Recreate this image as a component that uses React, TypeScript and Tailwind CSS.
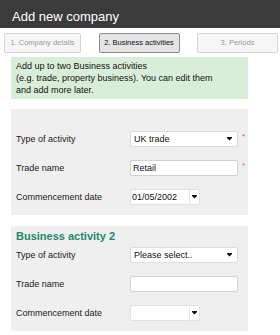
import React from 'react';

const font = { fontFamily: '"Liberation Sans", Arial, sans-serif' };

const Arrow = () => (
  <svg width="5" height="4" viewBox="0 0 5 4" className="block">
    <path d="M0 0h5v1L2.5 3.5 0 1z" fill="#111" />
  </svg>
);

const Select: React.FC<{ value: string }> = ({ value }) => (
  <div className="flex h-[16px] w-[108px] items-center justify-between rounded-[2px] border border-[#dcdcdc] bg-white pl-[3px] pr-[5px]">
    <span className="text-[9px] leading-none text-[#111]">{value}</span>
    <Arrow />
  </div>
);

const Input: React.FC<{ value?: string }> = ({ value }) => (
  <div className="flex h-[16px] w-[108px] items-center rounded-[2px] border border-[#d2d2d2] bg-white pl-[2px]">
    <span className="text-[9px] leading-none text-[#111]">{value}</span>
  </div>
);

const DateInput: React.FC<{ value?: string }> = ({ value }) => (
  <div className="flex h-[16px]">
    <div className="flex w-[59px] items-center rounded-l-[2px] border border-r-0 border-[#e2e2e2] bg-white pl-[1px]">
      <span className="text-[9px] leading-none text-[#111]">{value}</span>
    </div>
    <div className="flex w-[11px] items-center justify-center rounded-r-[2px] border border-[#e2e2e2] bg-white">
      <Arrow />
    </div>
  </div>
);

const Row: React.FC<{ label: string; required?: boolean; children: React.ReactNode }> = ({ label, required, children }) => (
  <div className="flex items-center">
    <div className="w-[114px] text-[9px] leading-none text-[#1a1a1a]">{label}</div>
    {children}
    {required && <span className="ml-[4px] -mt-[5px] text-[8px] leading-none text-[#e25b5b]">*</span>}
  </div>
);

const Tab: React.FC<{ label: string; active?: boolean; w: string }> = ({ label, active, w }) => (
  <div
    className={`flex h-[20px] items-center justify-center rounded-[2px] border text-[7.5px] ${w} ${
      active ? 'border-[#8c8c8c] bg-[#e4e4e4] text-[#111]' : 'border-[#d4d4d4] bg-[#f6f6f6] text-[#9a9a9a]'
    }`}
  >
    {label}
  </div>
);

export default function App() {
  return (
    <div className="h-[335px] w-[280px] overflow-hidden bg-white" style={font}>
      {/* Header */}
      <div className="h-[28px] bg-[#3b3b3b] pl-[12px] pt-[9px] text-[13px] leading-[15px] text-white">Add new company</div>

      {/* Step tabs */}
      <div className="mt-[5px] flex justify-between pl-[4px] pr-[2px]">
        <Tab label="1. Company details" w="w-[77px]" />
        <Tab label="2. Business activities" w="w-[81px]" active />
        <Tab label="3. Periods" w="w-[81px]" />
      </div>

      <div className="w-[248px] pl-[11px]">
        {/* Info box */}
        <div className="mt-[4px] bg-[#d9eed8] px-[5px] py-[3px] text-[9px] leading-[12px] text-[#111]">
          Add up to two Business activities
          <br />
          (e.g. trade, property business). You can edit them
          <br />
          and add more later.
        </div>

        {/* Activity 1 */}
        <div className="mt-[10px] flex flex-col gap-[13px] bg-[#efefef] pb-[10px] pl-[5px] pt-[22px]">
          <Row label="Type of activity" required>
            <Select value="UK trade" />
          </Row>
          <Row label="Trade name" required>
            <Input value="Retail" />
          </Row>
          <Row label="Commencement date">
            <DateInput value="01/05/2002" />
          </Row>
        </div>

        {/* Activity 2 */}
        <div className="mt-[11px] flex flex-col bg-[#efefef] pb-[10px] pl-[5px] pt-[4px]">
          <div className="text-[11px] font-bold leading-[13px] text-[#1b8a6b]">Business activity 2</div>
          <div className="mt-[4px] flex flex-col gap-[13px]">
            <Row label="Type of activity">
              <Select value="Please select.." />
            </Row>
            <Row label="Trade name">
              <Input />
            </Row>
            <Row label="Commencement date">
              <DateInput />
            </Row>
          </div>
        </div>
      </div>
    </div>
  );
}
